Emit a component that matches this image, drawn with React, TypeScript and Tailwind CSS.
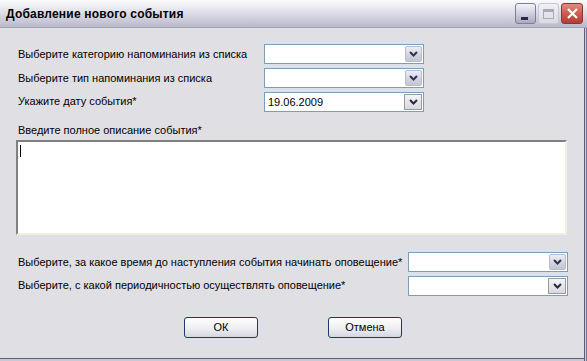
import React from "react";

const font = { fontFamily: '"Liberation Sans", Arial, sans-serif' };

function Chevron({ color = "#4d6185" }: { color?: string }) {
  return (
    <svg width="9" height="6" viewBox="0 0 9 6">
      <path d="M1 1 L4.5 4.5 L8 1" fill="none" stroke={color} strokeWidth="2" />
    </svg>
  );
}

function Combo({ value, framed }: { value?: string; framed?: boolean }) {
  return (
    <div className="w-[160px] h-[20px] border border-[#7f9db9] bg-white flex items-stretch">
      <div className="flex-1 flex items-center pl-[3px] text-[11px] text-black leading-none">{value}</div>
      {framed ? (
        <div className="w-[18px] m-px border border-[#9a9a9a] bg-gradient-to-b from-[#f4f4f6] to-[#d8d8e0] flex items-center justify-center">
          <Chevron color="#2a2a3a" />
        </div>
      ) : (
        <div className="w-[17px] m-px rounded-[2px] border border-[#b9bccf] bg-gradient-to-b from-[#eeeef4] via-[#d6d7e2] to-[#c3c4d4] flex items-center justify-center">
          <Chevron color="#2f3550" />
        </div>
      )}
    </div>
  );
}

function Btn({ children }: { children: React.ReactNode }) {
  return (
    <div className="w-[74px] h-[21px] rounded-[3px] border border-[#1c3a68] bg-gradient-to-b from-white via-[#f0f0f4] to-[#d6d6e2] flex items-center justify-center text-[11px] text-black">
      {children}
    </div>
  );
}

export default function App() {
  return (
    <div className="w-[587px] h-[361px] overflow-hidden bg-[#e0dfe3] flex flex-col" style={font}>
      {/* Title bar */}
      <div className="h-[28px] shrink-0 flex items-center bg-gradient-to-b from-[#fbfbfd] via-[#dcdce6] to-[#b9b9cb] border-b border-[#a4a4b8] pr-[4px]">
        <div className="flex-1 pl-[6px] text-[12px] font-bold text-black tracking-[0.2px]">
          Добавление нового события
        </div>
        <div className="flex gap-[2px] items-center">
          <div className="w-[21px] h-[21px] rounded-[3px] border border-[#7d7d9d] bg-gradient-to-b from-[#f4f4fa] via-[#d0d0e0] to-[#a9a9c3] relative">
            <div className="absolute left-[5px] top-[13px] w-[7px] h-[3px] bg-[#2a2a44]" />
          </div>
          <div className="w-[21px] h-[21px] rounded-[3px] border border-[#c8c8d4] bg-gradient-to-b from-[#f0f0f4] to-[#dadae2] flex items-center justify-center">
            <div className="w-[11px] h-[10px] border border-[#a8a8b8] border-t-[3px]" />
          </div>
          <div className="w-[22px] h-[21px] rounded-[3px] border border-[#8c3434] bg-gradient-to-b from-[#e58a7f] via-[#cf5a50] to-[#b13d36] flex items-center justify-center">
            <svg width="13" height="13" viewBox="0 0 13 13">
              <path d="M2 2 L11 11 M11 2 L2 11" stroke="white" strokeWidth="2.2" />
            </svg>
          </div>
        </div>
      </div>

      {/* Body */}
      <div className="flex-1 flex">
        <div className="flex-1 flex flex-col">
          <div className="flex-1 flex flex-col pl-[18px] text-[11px] text-black">
            <div className="pt-[16px] flex flex-col gap-[4px]">
              <div className="flex items-start">
                <div className="w-[246px] pt-[2px]">Выберите категорию напоминания из списка</div>
                <Combo />
              </div>
              <div className="flex items-start">
                <div className="w-[246px] pt-[2px]">Выберите тип напоминания из списка</div>
                <Combo />
              </div>
              <div className="flex items-start">
                <div className="w-[246px] pt-[1px]">Укажите дату события*</div>
                <Combo value="19.06.2009" framed />
              </div>
            </div>
            <div className="mt-[12px] leading-[13px]">Введите полное описание события*</div>
            <div className="mt-[3px] ml-[-2px] w-[551px] h-[95px] bg-white border-2 border-t-[#808080] border-l-[#808080] border-r-[#f1efe2] border-b-[#f1efe2] relative">
              <div className="absolute left-[2px] top-[3px] w-px h-[12px] bg-black" />
            </div>
            <div className="mt-[17px] flex flex-col gap-[4px]">
              <div className="flex items-start">
                <div className="w-[390px] pt-[2px]">Выберите, за какое время до наступления события начинать оповещение*</div>
                <Combo />
              </div>
              <div className="flex items-start">
                <div className="w-[390px] pt-[1px]">Выберите, с какой периодичностью осуществлять оповещение*</div>
                <Combo framed />
              </div>
            </div>
            <div className="mt-[21px] flex pl-[166px] gap-[70px]">
              <Btn>ОК</Btn>
              <Btn>Отмена</Btn>
            </div>
          </div>
          <div className="h-[3px] shrink-0 border-t border-[#5c5c7e] bg-[#c9c9d6]" />
        </div>
        <div className="w-[3px] shrink-0 border-l border-[#5c5c7e] border-r border-r-[#7a7a98] bg-[#c9c9d6]" />
      </div>
    </div>
  );
}
